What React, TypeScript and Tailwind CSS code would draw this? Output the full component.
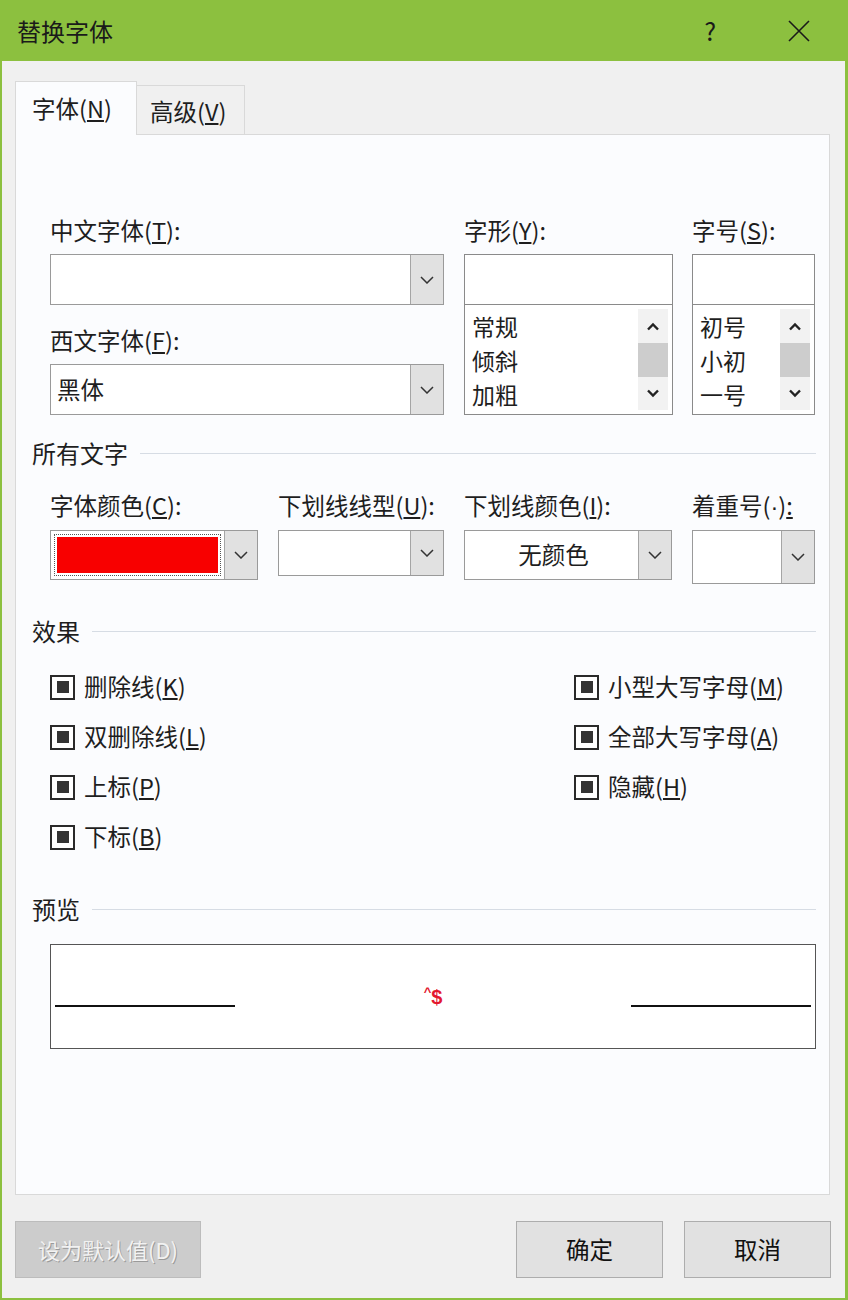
import React from 'react';

const font = "font-['Noto_Sans_CJK_SC','Liberation_Sans',sans-serif]";

function Chevron() {
  return (
    <svg width="14" height="8" viewBox="0 0 14 8">
      <path d="M1 1l6 6 6-6" fill="none" stroke="#333" strokeWidth="1.5" />
    </svg>
  );
}

function ScrollArrow({ up }: { up?: boolean }) {
  return (
    <svg width="14" height="9" viewBox="0 0 14 9">
      <path d={up ? 'M2 7.5l5-5 5 5' : 'M2 1.5l5 5 5-5'} fill="none" stroke="#222" strokeWidth="2.4" />
    </svg>
  );
}

function Label({ children }: { children: React.ReactNode }) {
  return <div className="h-[30px] leading-[30px] text-[23.5px] text-[#1e1e1e] whitespace-nowrap">{children}</div>;
}

function Heading({ text }: { text: string }) {
  return (
    <div className="flex items-center h-[30px]">
      <span className="text-[24px] leading-[30px] text-[#1e1e1e] whitespace-nowrap">{text}</span>
      <div className="flex-1 h-px bg-[#d6dce4] ml-[12px]" />
    </div>
  );
}

function Combo({ className, children }: { className: string; children?: React.ReactNode }) {
  return (
    <div className={`flex border border-[#9a9a9a] bg-white ${className}`}>
      <div className="flex-1 flex items-center min-w-0">{children}</div>
      <div className="w-[33px] border-l border-[#a5a5a5] bg-[#e1e1e1] flex items-center justify-center">
        <Chevron />
      </div>
    </div>
  );
}

function ListBox({ items, width }: { items: string[]; width: string }) {
  return (
    <div className={`flex flex-col ${width}`}>
      <div className="h-[51px] border border-[#8a8a8a] bg-white" />
      <div className="h-[110px] border border-t-0 border-[#8a8a8a] bg-white flex pt-[4px] pb-[4px] pr-[4px]">
        <div className="flex-1 flex flex-col pl-[7px]">
          {items.map((it) => (
            <div key={it} className="h-[34.5px] leading-[34px] text-[23px] text-[#1e1e1e]">
              {it}
            </div>
          ))}
        </div>
        <div className="w-[30px] flex flex-col bg-[#f2f2f2]">
          <div className="h-[34px] flex items-center justify-center"><ScrollArrow up /></div>
          <div className="h-[34px] bg-[#cdcdcd]" />
          <div className="flex-1 flex items-center justify-center"><ScrollArrow /></div>
        </div>
      </div>
    </div>
  );
}

function Check({ label, k }: { label: string; k: string }) {
  return (
    <div className="h-[50px] flex items-center">
      <div className="w-[25px] h-[25px] border-2 border-[#2a2a2a] bg-white flex items-center justify-center">
        <div className="w-[12px] h-[12px] bg-[#333]" />
      </div>
      <span className="ml-[9px] text-[23.5px] text-[#1e1e1e] whitespace-nowrap">
        {label}(<u>{k}</u>)
      </span>
    </div>
  );
}

export default function App() {
  return (
    <div className={`w-[848px] h-[1300px] bg-[#8cc03f] flex flex-col ${font}`}>
      {/* TITLE BAR ------------------------------------------------------*/}
      <div className="h-[61px] flex items-center pl-[17px] shrink-0">
        <span className="text-[24px] text-[#1a1a1a]">替换字体</span>
        <span className="ml-auto text-[25px] text-[#1a1a1a] mr-[72px]">?</span>
        <svg width="22" height="22" viewBox="0 0 22 22" className="mr-[38px]">
          <path d="M1 1l20 20M21 1L1 21" stroke="#1a1a1a" strokeWidth="1.6" />
        </svg>
      </div>

      {/* BODY ------------------------------------------------------*/}
      <div className="flex-1 ml-[2px] mr-[3px] mb-[2px] bg-[#f0f0f0] flex flex-col pt-[20px] pl-[13px] pr-[14px]">
        {/* Tabs */}
        <div className="flex items-end h-[54px]">
          <div className="relative z-10 w-[122px] h-[54px] border border-b-0 border-[#d9d9d9] bg-[#fbfcfe] pl-[16px] pt-[9px] text-[23.5px] text-[#1e1e1e]">
            字体(<u>N</u>)
          </div>
          <div className="w-[108px] h-[50px] border border-l-0 border-[#d9d9d9] bg-[#f0f0f0] pl-[13px] pt-[8px] text-[23.5px] text-[#1e1e1e]">
            高级(<u>V</u>)
          </div>
        </div>

        {/* Panel */}
        <div className="-mt-px w-[815px] h-[1061px] border border-[#d9d9d9] bg-[#fbfcfe] pt-[80px] pl-[16px] pr-[13px] flex flex-col">
          {/* Fonts row */}
          <div className="flex ml-[18px] gap-x-[20px]">
            <div className="w-[394px] flex flex-col">
              <Label>中文字体(<u>T</u>):</Label>
              <Combo className="h-[51px] mt-[9px]" />
              <div className="mt-[20px]"><Label>西文字体(<u>F</u>):</Label></div>
              <Combo className="h-[51px] mt-[9px]">
                <span className="pl-[6px] text-[23.5px] text-[#1e1e1e]">黑体</span>
              </Combo>
            </div>
            <div className="w-[209px] flex flex-col">
              <Label>字形(<u>Y</u>):</Label>
              <div className="mt-[9px]"><ListBox items={['常规', '倾斜', '加粗']} width="w-[209px]" /></div>
            </div>
            <div className="w-[123px] flex flex-col -ml-px">
              <Label>字号(<u>S</u>):</Label>
              <div className="mt-[9px]"><ListBox items={['初号', '小初', '一号']} width="w-[123px]" /></div>
            </div>
          </div>

          {/* All text */}
          <div className="mt-[23px]"><Heading text="所有文字" /></div>
          <div className="flex ml-[18px] gap-x-[20px] mt-[22px]">
            <div className="w-[208px] flex flex-col">
              <Label>字体颜色(<u>C</u>):</Label>
              <Combo className="h-[50px] mt-[10px]">
                <div className="w-full h-full p-[3px]">
                  <div className="w-full h-full border border-dotted border-[#555] p-[2px]">
                    <div className="w-full h-full bg-[#f80000]" />
                  </div>
                </div>
              </Combo>
            </div>
            <div className="w-[166px] flex flex-col">
              <Label>下划线线型(<u>U</u>):</Label>
              <Combo className="h-[46px] mt-[10px]" />
            </div>
            <div className="w-[208px] flex flex-col">
              <Label>下划线颜色(<u>I</u>):</Label>
              <Combo className="h-[50px] mt-[10px]">
                <span className="w-full text-center pl-[4px] text-[23.5px] text-[#1e1e1e]">无颜色</span>
              </Combo>
            </div>
            <div className="w-[123px] flex flex-col">
              <Label>
                着重号(<span className="font-['Liberation_Sans',sans-serif]">·</span>)<u>:</u>
              </Label>
              <Combo className="h-[54px] mt-[10px]" />
            </div>
          </div>

          {/* Effects */}
          <div className="mt-[32px]"><Heading text="效果" /></div>
          <div className="grid grid-cols-[524px_1fr] ml-[18px] mt-[16px]">
            <div className="flex flex-col">
              <Check label="删除线" k="K" />
              <Check label="双删除线" k="L" />
              <Check label="上标" k="P" />
              <Check label="下标" k="B" />
            </div>
            <div className="flex flex-col">
              <Check label="小型大写字母" k="M" />
              <Check label="全部大写字母" k="A" />
              <Check label="隐藏" k="H" />
            </div>
          </div>

          {/* Preview */}
          <div className="mt-[32px]"><Heading text="预览" /></div>
          <div className="ml-[18px] mt-[20px] h-[105px] border border-[#555] bg-white flex items-center px-[4px]">
            <div className="w-[180px] h-[2px] bg-[#111] mt-[18px]" />
            <div className="flex-1 text-center font-['Liberation_Sans',sans-serif] text-[20px] font-bold text-[#e3182f]">
              <span className="text-[13px] align-top">^</span>$
            </div>
            <div className="w-[180px] h-[2px] bg-[#111] mt-[18px]" />
          </div>
        </div>

        {/* Buttons */}
        <div className="flex mt-[26px] h-[57px]">
          <div className="w-[186px] h-[57px] border border-[#bcbcbc] bg-[#cccccc] flex items-center justify-center text-[22px] text-[#f2f2f2] [text-shadow:1px_1px_0_#9a9a9a]">
            设为默认值(D)
          </div>
          <div className="ml-auto w-[147px] h-[57px] border border-[#adadad] bg-[#e1e1e1] flex items-center justify-center text-[23.5px] text-[#111]">
            确定
          </div>
          <div className="ml-[21px] w-[147px] h-[57px] border border-[#adadad] bg-[#e1e1e1] flex items-center justify-center text-[23.5px] text-[#111]">
            取消
          </div>
        </div>
      </div>
    </div>
  );
}
